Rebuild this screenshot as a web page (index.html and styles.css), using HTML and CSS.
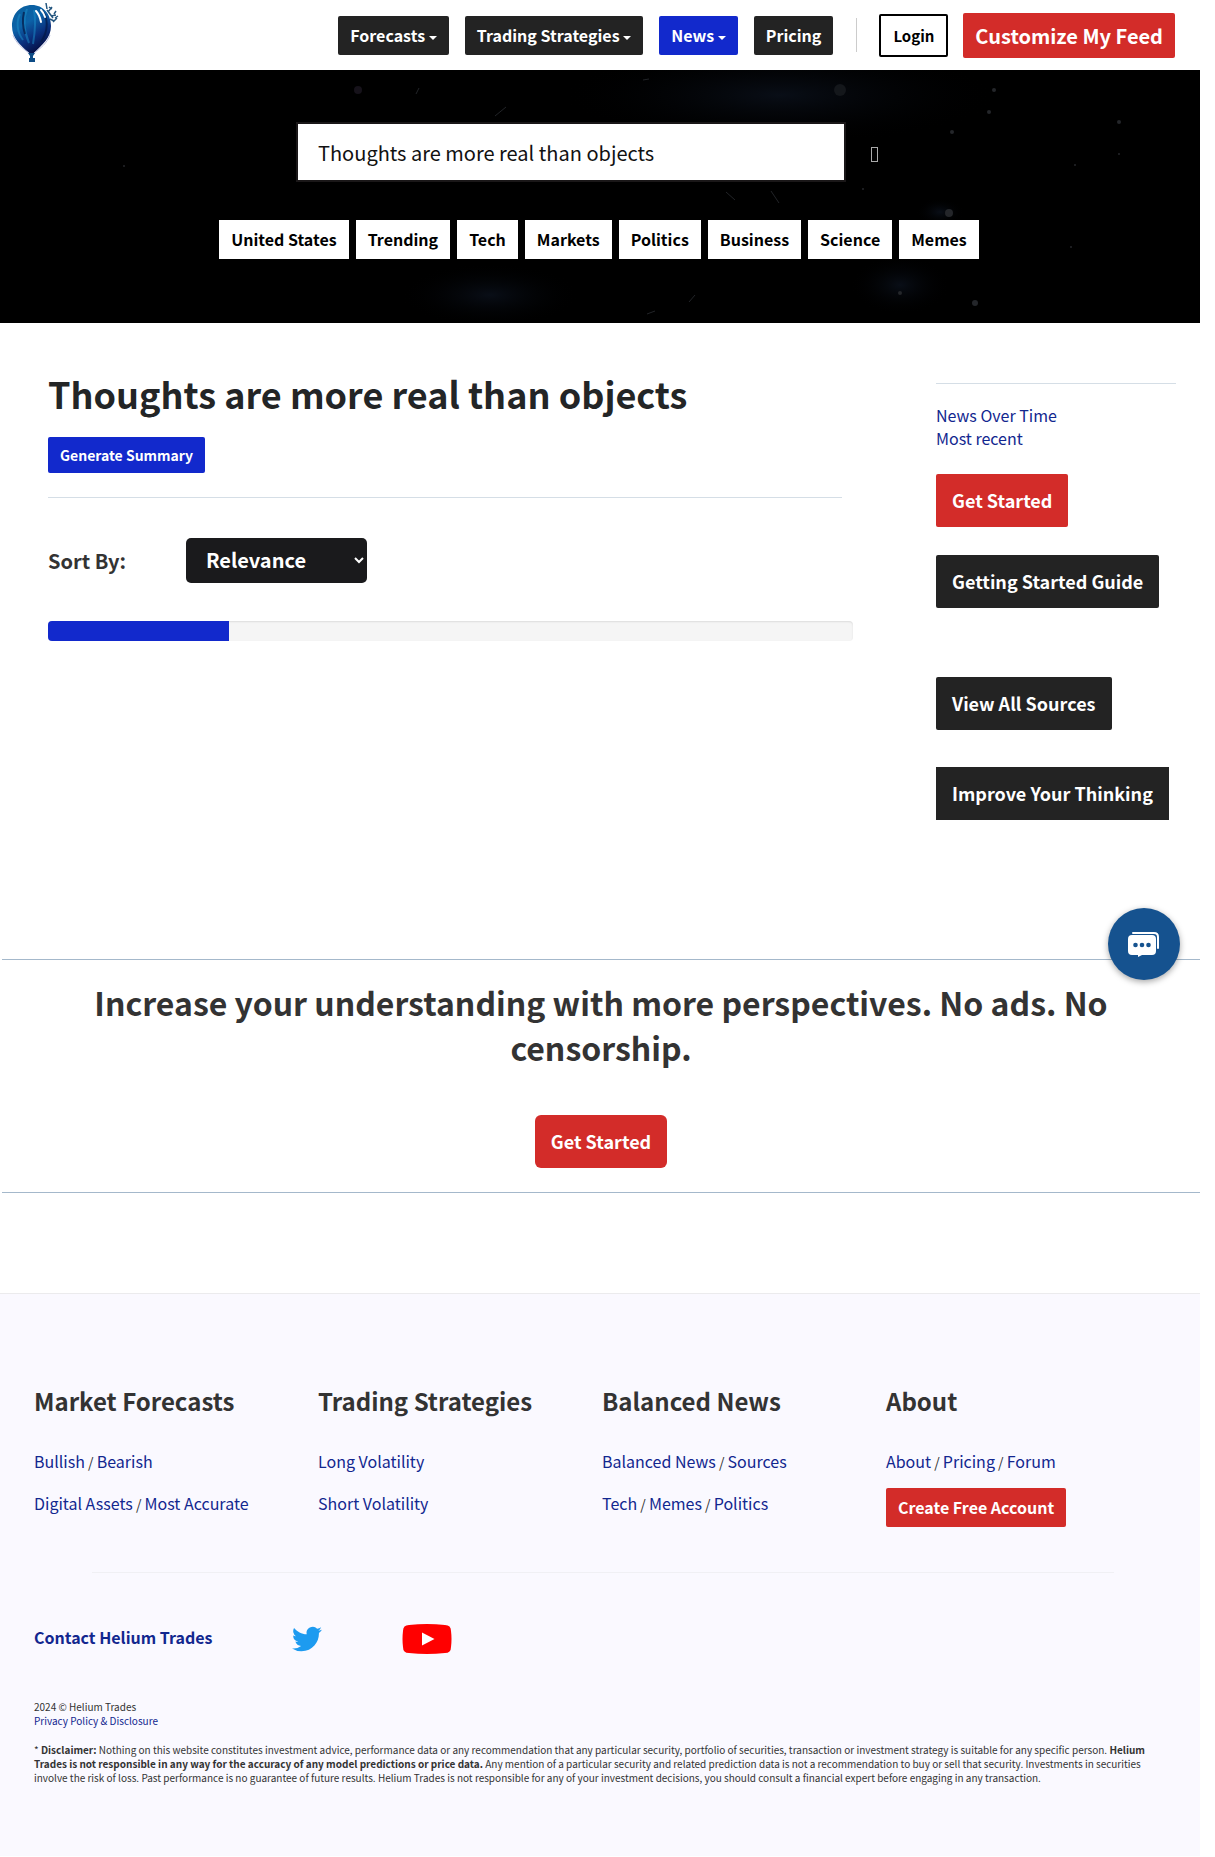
FILE: index.html
```
<!DOCTYPE html>
<html lang="en">

<head>
    <meta charset="UTF-8">
    <meta name="viewport" content="width=device-width, initial-scale=1.0">
    <title>Thoughts are more real than objects - Helium Trades</title>
    <link rel="stylesheet" href="styles.css">
</head>

<body>
    <header class="navbar">
        <a class="logo" href="#" aria-label="Helium Trades">
            <svg viewBox="0 0 50 62" width="50" height="62">
                <defs>
                    <linearGradient id="balloonFill" x1="0" y1="0" x2="0.5" y2="1">
                        <stop offset="0" stop-color="#0a5f9c" />
                        <stop offset="0.45" stop-color="#0c62a8" />
                        <stop offset="0.75" stop-color="#0a2f7c" />
                        <stop offset="1" stop-color="#06124a" />
                    </linearGradient>
                </defs>
                <path d="M22 3C10 3 2 12 2 24c0 12 8 19 17 27h5c8-8 17-15 17-27C41 12 33 3 22 3z" fill="url(#balloonFill)" />
                <path d="M10 12c-4 8-3 18 3 26M17 7c-4 10-3 22 2 34M24 8c2 10 1 22-1 34" fill="none" stroke="#1c8fc9" stroke-width="2" opacity="0.5" />
                <path d="M32 8c6 8 7 20-1 32M14 10c-2 9-1 16 1 22" fill="none" stroke="#041844" stroke-width="2" opacity="0.7" />
                <path d="M26 9c2 2 4 6 5 11M31 8c2 2 3 4 4 7" fill="none" stroke="#fff" stroke-width="2" stroke-linecap="round" />
                <path d="M3 33c3 8 9 13 16 18M40 33c-3 8-9 13-16 18" fill="none" stroke="#b9bfe0" stroke-width="1" />
                <path d="M18 51h7l-2 3v2h2v4h-6v-4h1v-2z" fill="#0d4c86" />
                <path d="M36 1l1 6M38 10l4-5M41 14l5-1M43 20l4-4M46 9l-2 3M39 5l3 2M48 14l-3 2M40 17l4 2M37 8l6 8" stroke="#24567f" stroke-width="1.500" fill="none" />
            </svg>
        </a>
        <nav class="nav-links">
            <button class="btn btn-dark">Forecasts <span class="caret"></span></button>
            <button class="btn btn-dark">Trading Strategies <span class="caret"></span></button>
            <button class="btn btn-blue">News <span class="caret"></span></button>
            <a class="btn btn-dark" href="#">Pricing</a>
        </nav>
        <div class="nav-account">
            <a class="btn btn-outline" href="#">Login</a>
            <a class="btn btn-red btn-feed" href="#">Customize My Feed</a>
        </div>
    </header>

    <section class="hero">
        <svg class="stars" viewBox="0 0 1200 253" preserveAspectRatio="xMidYMid slice" aria-hidden="true">
            <defs>
                <radialGradient id="haze">
                    <stop offset="0" stop-color="#090e17" />
                    <stop offset="1" stop-color="#000" stop-opacity="0" />
                </radialGradient>
            </defs>
            <ellipse cx="780" cy="25" rx="220" ry="50" fill="url(#haze)" />
            <ellipse cx="490" cy="225" rx="90" ry="32" fill="url(#haze)" />
            <ellipse cx="900" cy="215" rx="50" ry="30" fill="url(#haze)" />
            <ellipse cx="940" cy="142" rx="24" ry="14" fill="url(#haze)" />
            <g fill="#24262a">
                <circle cx="358" cy="20" r="4" fill="#16121a" />
                <circle cx="840" cy="20" r="6" fill="#14171b" />
                <circle cx="949" cy="143" r="4" />
                <circle cx="975" cy="233" r="3" />
                <circle cx="900" cy="223" r="2" />
                <circle cx="952" cy="62" r="2" />
                <circle cx="994" cy="20" r="2" />
                <circle cx="989" cy="42" r="2" />
                <circle cx="1119" cy="52" r="2" />
                <circle cx="1075" cy="95" r="1" />
                <circle cx="1119" cy="84" r="1" />
                <circle cx="1071" cy="177" r="1" />
                <circle cx="863" cy="119" r="1" />
                <circle cx="124" cy="96" r="1" />
            </g>
            <path d="M495 46l11-9M416 24l3-6M726 122l9 8M771 121l8 12M689 232l6-7M647 244l8-3M643 10l6-1" stroke="#222428" stroke-width="1" fill="none" />
        </svg>
        <form class="search">
            <input class="search-input" type="text" aria-label="Search" value="Thoughts are more real than objects">
            <button class="search-button" type="button" aria-label="Search"><span class="search-glyph"></span></button>
        </form>
        <div class="topics">
            <a class="topic" href="#">United States</a>
            <a class="topic" href="#">Trending</a>
            <a class="topic" href="#">Tech</a>
            <a class="topic" href="#">Markets</a>
            <a class="topic" href="#">Politics</a>
            <a class="topic" href="#">Business</a>
            <a class="topic" href="#">Science</a>
            <a class="topic" href="#">Memes</a>
        </div>
    </section>

    <div class="content">
        <main class="results">
            <h1>Thoughts are more real than objects</h1>
            <button class="btn btn-blue btn-small">Generate Summary</button>
            <hr class="line results-line">
            <div class="sort">
                <label for="sortBy">Sort By:</label>
                <select id="sortBy">
                    <option>Relevance</option>
                    <option>Date</option>
                </select>
            </div>
            <div class="progress">
                <div class="progress-bar"></div>
            </div>
        </main>
        <aside class="sidebar">
            <hr class="line">
            <div class="side-links">
                <a href="#">News Over Time</a>
                <a href="#">Most recent</a>
            </div>
            <a class="btn btn-red btn-large" href="#">Get Started</a>
            <a class="btn btn-dark btn-large side-guide" href="#">Getting Started Guide</a>
            <a class="btn btn-dark btn-large side-sources" href="#">View All Sources</a>
            <a class="btn btn-dark btn-large side-thinking" href="#">Improve Your Thinking</a>
        </aside>
    </div>

    <section class="pitch">
        <h2>Increase your understanding with more perspectives. No ads. No censorship.</h2>
        <a class="btn btn-red btn-large btn-round" href="#">Get Started</a>
    </section>

    <footer class="footer">
        <div class="footer-columns">
            <div>
                <h3>Market Forecasts</h3>
                <p><a href="#">Bullish</a> / <a href="#">Bearish</a></p>
                <p><a href="#">Digital Assets</a> / <a href="#">Most Accurate</a></p>
            </div>
            <div>
                <h3>Trading Strategies</h3>
                <p><a href="#">Long Volatility</a></p>
                <p><a href="#">Short Volatility</a></p>
            </div>
            <div>
                <h3>Balanced News</h3>
                <p><a href="#">Balanced News</a> / <a href="#">Sources</a></p>
                <p><a href="#">Tech</a> / <a href="#">Memes</a> / <a href="#">Politics</a></p>
            </div>
            <div>
                <h3>About</h3>
                <p><a href="#">About</a> / <a href="#">Pricing</a> / <a href="#">Forum</a></p>
                <a class="btn btn-red" href="#">Create Free Account</a>
            </div>
        </div>
        <hr class="footer-line">
        <div class="contact">
            <a class="contact-link" href="#">Contact Helium Trades</a>
            <a class="twitter" href="#" aria-label="Twitter">
                <svg viewBox="0 0 24 24" width="30" height="30">
                    <path fill="#1d9bf0" d="M23.95 4.57a10 10 0 0 1-2.82.77 4.96 4.96 0 0 0 2.16-2.72c-.95.55-2 .96-3.13 1.18a4.92 4.92 0 0 0-8.38 4.48C7.69 8.1 4.07 6.13 1.64 3.16a4.92 4.92 0 0 0 1.52 6.57 4.9 4.9 0 0 1-2.23-.61v.06a4.92 4.92 0 0 0 3.95 4.83 5 5 0 0 1-2.21.08 4.94 4.94 0 0 0 4.6 3.42A9.87 9.87 0 0 1 0 19.54a14 14 0 0 0 7.55 2.21c9.05 0 14-7.5 14-13.98 0-.21 0-.42-.02-.63a9.94 9.94 0 0 0 2.46-2.55z" />
                </svg>
            </a>
            <a class="youtube" href="#" aria-label="YouTube">
                <svg viewBox="0 0 50 30" width="50" height="30">
                    <path fill="#f00" d="M7 1Q25-1 43 1q6 0 6 6 1 8 0 16 0 6-6 6-18 2-36 0-6 0-6-6-1-8 0-16 0-6 6-6z" />
                    <path fill="#fff" d="M20 8.500v13L32.500 15z" />
                </svg>
            </a>
        </div>
        <div class="legal">
            <p>2024 © Helium Trades<br><a href="#">Privacy Policy &amp; Disclosure</a></p>
            <p>* <b>Disclaimer:</b> Nothing on this website constitutes investment advice, performance data or any recommendation that any particular security, portfolio of securities, transaction or investment strategy is suitable for any specific person. <b>Helium Trades is not responsible in any way for the accuracy of any model predictions or price data.</b> Any mention of a particular security and related prediction data is not a recommendation to buy or sell that security. Investments in securities involve the risk of loss. Past performance is no guarantee of future results. Helium Trades is not responsible for any of your investment decisions, you should consult a financial expert before engaging in any transaction.</p>
        </div>
    </footer>

    <button class="chat" aria-label="Open chat">
        <svg viewBox="0 0 32 26" width="32" height="26">
            <path d="M5 2h21q4 0 4 4v11" fill="none" stroke="#fff" stroke-width="2" stroke-linecap="round" />
            <path d="M4 4h20q4 0 4 4v12q0 4-4 4H14l-4 2v-2H4q-4 0-4-4V8q0-4 4-4z" fill="#fff" />
            <g fill="#15528f">
                <circle cx="7.500" cy="14" r="2.300" />
                <circle cx="14" cy="14" r="2.300" />
                <circle cx="20.500" cy="14" r="2.300" />
            </g>
        </svg>
    </button>
</body>

</html>
```
FILE: styles.css
```
* {
    box-sizing: border-box;
}

body {
    position: relative;
    margin: 0 15px 0 0;
    font-family: "Noto Sans CJK SC", "Noto Sans", sans-serif;
    font-size: 16px;
    line-height: 23px;
    color: #333;
    background-color: #fff;
}

a {
    color: #12278f;
    text-decoration: none;
}

h1,
h2,
h3,
p {
    margin: 0;
}

/* buttons */
.btn {
    display: inline-block;
    border: 0;
    border-radius: 2px;
    padding: 8px 12px;
    font-family: inherit;
    font-size: 16px;
    font-weight: bold;
    line-height: 23px;
    color: #fff;
    white-space: nowrap;
    cursor: pointer;
}

.btn-dark {
    background-color: #232323;
}

.btn-blue {
    background-color: #1229cc;
}

.btn-red {
    background-color: #d32c29;
}

.btn-outline {
    border: 2px solid #000;
    color: #000;
    font-size: 15px;
}

.btn-feed {
    font-size: 20px;
    line-height: 29px;
}

.btn-small {
    font-size: 14px;
    line-height: 20px;
}

.btn-large {
    padding: 15px 16px;
    font-size: 18px;
}

.btn-round {
    border-radius: 6px;
}

.caret {
    display: inline-block;
    border-top: 4px solid;
    border-left: 4px solid transparent;
    border-right: 4px solid transparent;
    vertical-align: 2px;
}

/* top bar */
.navbar {
    display: flex;
    align-items: center;
    height: 70px;
    padding: 0 25px 0 10px;
}

.logo {
    height: 66px;
}

.nav-links {
    display: flex;
    gap: 16px;
    margin-left: auto;
}

.nav-account {
    display: flex;
    align-items: center;
    gap: 15px;
    margin-left: 23px;
}

.nav-account::before {
    content: "";
    width: 1px;
    height: 34px;
    margin-right: 7px;
    background-color: #ccc;
}

/* search area */
.hero {
    position: relative;
    padding: 52px 22px 64px 20px;
    background-color: #000;
}

.stars {
    position: absolute;
    top: 0;
    left: 0;
    width: 100%;
    height: 100%;
}

.search {
    position: relative;
    display: flex;
    justify-content: center;
    margin-bottom: 38px;
}

.search-input {
    width: 550px;
    height: 60px;
    border: 2px solid #1a1718;
    padding: 0 20px;
    font-family: inherit;
    font-size: 20px;
    color: #111;
    background-color: #fff;
}

.search-button {
    width: 56px;
    border: 0;
    padding: 4px 0 0;
    background: none;
}

.search-glyph {
    display: inline-block;
    width: 7px;
    height: 15px;
    border: 1px solid #aaa;
    vertical-align: middle;
}

.topics {
    position: relative;
    display: flex;
    flex-wrap: wrap;
    justify-content: center;
    gap: 7px;
}

.topic {
    padding: 8px 12px;
    font-weight: bold;
    color: #000;
    background-color: #fff;
}

/* results */
.content {
    display: flex;
    justify-content: space-between;
    padding: 48px 24px 139px 48px;
}

.results {
    flex: 1;
    max-width: 805px;
}

h1 {
    margin-bottom: 22px;
    font-size: 36px;
    line-height: 44px;
    color: #232526;
}

.line {
    height: 1px;
    margin: 0;
    border: 0;
    background-color: #d5dee6;
}

.results-line {
    margin: 24px 11px 40px 0;
}

.sort {
    display: flex;
    align-items: center;
    gap: 60px;
    margin-bottom: 38px;
    font-size: 20px;
    font-weight: bold;
}

#sortBy {
    width: 181px;
    height: 45px;
    border: 0;
    border-radius: 5px;
    padding: 0 0 2px 16px;
    font-family: inherit;
    font-size: 20px;
    font-weight: bold;
    color: #fff;
    background-color: #1a1a1c;
}

.progress {
    height: 20px;
    border-radius: 4px;
    background-color: #f5f5f5;
    box-shadow: inset 0 1px 2px rgba(0, 0, 0, 0.1);
    overflow: hidden;
}

.progress-bar {
    width: 22.5%;
    height: 100%;
    background-color: #1229cc;
}

.sidebar {
    display: flex;
    flex-direction: column;
    align-items: flex-start;
    width: 240px;
    padding-top: 12px;
}

.sidebar .line {
    width: 100%;
}

.side-links {
    display: flex;
    flex-direction: column;
    margin: 20px 0 24px;
}

.side-guide {
    margin-top: 28px;
}

.side-sources {
    margin-top: 69px;
}

.side-thinking {
    margin-top: 37px;
    border-radius: 0;
}

/* call to action */
.pitch {
    margin: 0 0 100px 2px;
    border-top: 1px solid #a4b8cb;
    border-bottom: 1px solid #a4b8cb;
    padding: 20px 60px 24px;
    text-align: center;
}

h2 {
    margin-bottom: 45px;
    font-size: 32px;
    line-height: 45px;
}

/* footer */
.footer {
    border-top: 1px solid #ebebed;
    padding: 89px 34px 56px;
    background-color: #faf9ff;
}

.footer-columns {
    display: grid;
    grid-template-columns: repeat(4, 284px);
}

h3 {
    margin-bottom: 31px;
    font-size: 24px;
    line-height: 36px;
}

.footer-columns p {
    margin-bottom: 18px;
    font-size: 14px;
}

.footer-columns p a {
    font-size: 16px;
}

.footer-columns .btn {
    margin-top: -4px;
}

.footer-line {
    height: 1px;
    margin: 38px 52px 51px 58px;
    border: 0;
    background-color: #f0f0f4;
}

.contact {
    display: flex;
    align-items: center;
    height: 30px;
    margin-bottom: 46px;
}

.contact svg {
    display: block;
}

.contact-link {
    padding-bottom: 4px;
    font-weight: bold;
}

.twitter {
    margin-left: 80px;
}

.youtube {
    margin-left: 80px;
}

.legal {
    font-size: 10px;
    line-height: 14px;
}

.legal p {
    margin-bottom: 15px;
}

/* floating chat button */
.chat {
    position: absolute;
    top: 908px;
    right: 20px;
    width: 72px;
    height: 72px;
    border: 0;
    border-radius: 50%;
    background-color: #15528f;
    box-shadow: 0 2px 6px rgba(0, 0, 0, 0.35);
}

.chat svg {
    display: block;
    margin: 0 auto;
}
```
